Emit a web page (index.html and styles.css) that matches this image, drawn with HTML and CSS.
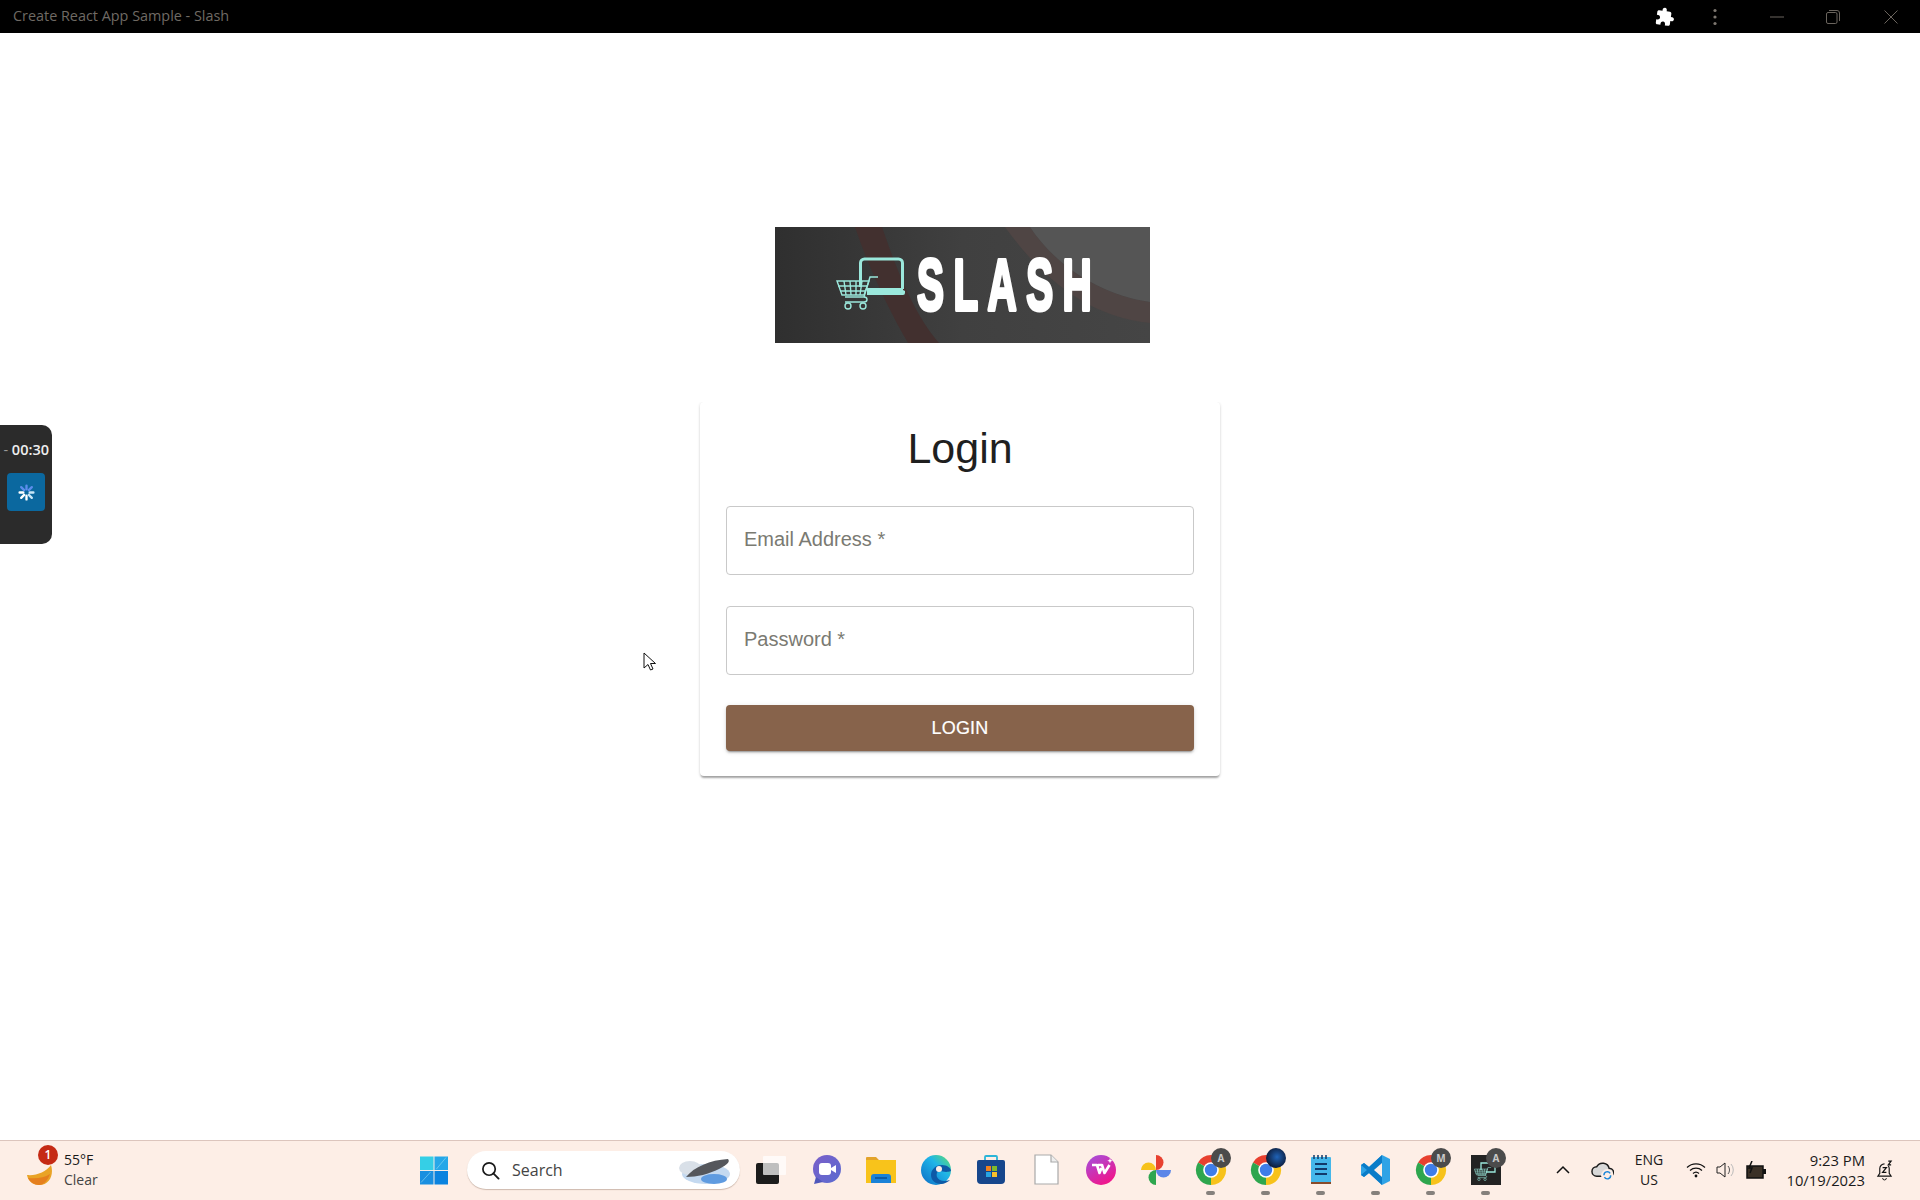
FILE: index.html
```html
<!DOCTYPE html>
<html lang="en">
<head>
<meta charset="utf-8">
<title>Create React App Sample - Slash</title>
<link rel="stylesheet" href="styles.css">
</head>
<body>
<svg class="defs" width="0" height="0" aria-hidden="true">
  <symbol id="chrome" viewBox="0 0 32 32">
    <path fill="#e8402f" d="M16 16L3 8.500A15 15 0 0 1 29 8.500z"/>
    <path fill="#f7c21b" d="M16 16L29 8.500A15 15 0 0 1 16 31z"/>
    <path fill="#2ea64e" d="M16 16L16 31A15 15 0 0 1 3 8.500z"/>
    <circle cx="16" cy="16" r="7.800" fill="#fff"/>
    <circle cx="16" cy="16" r="6.200" fill="#3f7de8"/>
  </symbol>
  <symbol id="cart" viewBox="0 0 44 34">
    <g fill="none" stroke="#9be8dc" stroke-width="1.400">
      <path d="M42 1h-8l-6 20H9"/>
      <path d="M1 5h32l-5 14H6z"/>
      <path d="M2 10h29M4 15h25M8 5l2 14M14 5l1 14M20 5v14M26 5l-2 14"/>
      <path d="M28 21c4 0 4 5 0 5H9"/>
      <circle cx="12" cy="30" r="3"/>
      <circle cx="27" cy="30" r="3"/>
    </g>
  </symbol>
</svg>

<header class="titlebar">
  <span class="window-title">Create React App Sample - Slash</span>
  <div class="window-actions">
    <svg class="puzzle" viewBox="0 0 24 24"><path fill="#fff" transform="rotate(8 12 12)" d="M20.500 11H19V7c0-1.100-.9-2-2-2h-4V3.500C13 2.120 11.880 1 10.500 1S8 2.120 8 3.500V5H4c-1.100 0-1.990.9-1.990 2v3.800H3.500c1.490 0 2.700 1.210 2.700 2.700s-1.210 2.700-2.700 2.700H2V20c0 1.100.9 2 2 2h3.800v-1.500c0-1.490 1.210-2.700 2.700-2.700 1.490 0 2.700 1.210 2.700 2.700V22H17c1.100 0 2-.9 2-2v-4h1.500c1.380 0 2.500-1.120 2.500-2.500S21.880 11 20.500 11z"/></svg>
    <svg class="kebab" viewBox="0 0 6 18"><g fill="#7d7770"><circle cx="3" cy="2.500" r="1.600"/><circle cx="3" cy="9" r="1.600"/><circle cx="3" cy="15.500" r="1.600"/></g></svg>
    <svg class="win-btn win-min" viewBox="0 0 14 14"><path d="M0 7h14" stroke="#6b655e" stroke-width="1"/></svg>
    <svg class="win-btn win-max" viewBox="0 0 14 14"><g fill="none" stroke="#6b655e"><rect x=".5" y="2.500" width="10.500" height="11" rx="1.500"/><path d="M3 .5h8a2.500 2.500 0 0 1 2.500 2.500v8"/></g></svg>
    <svg class="win-btn win-close" viewBox="0 0 14 14"><path d="M.5.5l13 13M13.500.5l-13 13" stroke="#6b655e" fill="none"/></svg>
  </div>
</header>

<main class="page">
  <svg class="logo" viewBox="0 0 375 116" role="img" aria-label="Slash logo">
    <defs>
      <linearGradient id="logoBg" x1="0" y1="0" x2="1" y2="0">
        <stop offset="0" stop-color="#2f2f2f"/><stop offset=".5" stop-color="#404040"/><stop offset="1" stop-color="#454545"/>
      </linearGradient>
    </defs>
    <rect width="375" height="116" fill="url(#logoBg)"/>
    <path fill="#42302f" d="M80 0h27c8 22 26 80 57 116h-31C115 85 94 42 80 0z"/>
    <path fill="#4f4544" d="M230 0h25c25 38 70 68 120 75v21C310 90 262 45 230 0z"/>
    <path fill="#555" d="M255 0h120v75C325 68 280 38 255 0z"/>
    <path d="M85.500 60V36a4 4 0 0 1 4-4h34a4 4 0 0 1 4 4v26" fill="none" stroke="#9be8dc" stroke-width="3"/>
    <path fill="#9be8dc" d="M92 61h36v2l2 1v2a2 2 0 0 1-2 2H92z"/>
    <use href="#cart" x="61" y="48" width="44" height="36"/>
    <text class="logo-word" transform="translate(142 83) scale(.56 1)">SLASH</text>
  </svg>

  <form class="card">
    <h1 class="card-title">Login</h1>
    <input class="field field-email" type="email" placeholder="Email Address *">
    <input class="field field-password" type="password" placeholder="Password *">
    <button class="submit" type="button">LOGIN</button>
  </form>

  <aside class="recorder">
    <div class="rec-time"><span class="rec-dash">-</span> 00:30</div>
    <div class="rec-button">
      <svg class="rec-spin" viewBox="0 0 16 16">
        <g stroke-width="2.200" stroke-linecap="round">
          <path stroke="#fff" d="M8 11v3.500M5.800 10.200l-2.800 2.800M5 8H1.500"/>
          <path stroke="#c8e6f8" d="M10.200 10.200l2.800 2.800M11 8h3.500"/>
          <path stroke="#5c8dec" d="M5.800 5.800L3 3M8 5V1.500M10.200 5.800L13 3"/>
        </g>
      </svg>
    </div>
  </aside>

  <svg class="cursor" viewBox="0 0 14 20"><path d="M1 1v15l4-3.500 2.500 5.500 2.500-1-2.500-5.500h5z" fill="#fff" stroke="#111" stroke-width="1"/></svg>
</main>

<footer class="taskbar">
  <div class="weather">
    <div class="weather-icon">
      <svg class="moon" viewBox="0 0 26 26"><path fill="#e9a326" d="M0 15c9 1 19-3 24-10 3 9-1 20-12 20C6 25 1 21 0 15z"/><path fill="#e57f1e" d="M1 18c8 1 16 0 22-4-2 6-6 11-11 11-5 0-9-3-11-7z"/></svg>
      <span class="badge-red">1</span>
    </div>
    <div class="weather-text">
      <span class="temp">55°F</span>
      <span class="cond">Clear</span>
    </div>
  </div>

  <svg class="start" viewBox="0 0 29 29">
    <rect x="0" y="0" width="14" height="14" fill="#35cfe6"/>
    <rect x="15" y="0" width="14" height="14" fill="#25a7e8"/>
    <rect x="0" y="15" width="14" height="14" fill="#1a8fe0"/>
    <rect x="15" y="15" width="14" height="14" fill="#0b83df"/>
    <path d="M17 13L27 1M1 27L11 16" stroke="#9be3f5" stroke-width=".8" opacity=".7"/>
  </svg>

  <div class="search">
    <svg class="search-glyph" viewBox="0 0 20 20"><circle cx="8.500" cy="8.500" r="6.500" fill="none" stroke="#1a1a1a" stroke-width="1.800"/><path d="M13 13l5.500 5.500" stroke="#1a1a1a" stroke-width="2" stroke-linecap="round"/></svg>
    <span class="search-label">Search</span>
    <svg class="search-art" viewBox="0 0 54 28">
      <ellipse cx="28" cy="18" rx="24" ry="10" fill="#c4d9f0"/>
      <ellipse cx="36" cy="23" rx="13" ry="5" fill="#5f9be0"/>
      <ellipse cx="12" cy="12" rx="11" ry="7" fill="#d9e0e8"/>
      <path d="M8 21C16 11 32 4 50 3c3 3-3 7-9 10-10 5-22 8-33 8z" fill="#55575c"/>
    </svg>
  </div>

  <div class="apps">
    <div class="app">
      <svg class="ico" viewBox="0 0 32 32"><rect x="1" y="9" width="23" height="21" rx="2" fill="#1c1c1c"/><rect x="8" y="2" width="23" height="19" rx="1" fill="#fff" fill-opacity=".72"/></svg>
    </div>
    <div class="app">
      <svg class="ico" viewBox="0 0 32 32"><defs><linearGradient id="meet" x1="0" y1="0" x2="1" y2="1"><stop offset="0" stop-color="#7b5fc9"/><stop offset="1" stop-color="#5a6bd0"/></linearGradient></defs><circle cx="17" cy="15" r="14" fill="url(#meet)"/><path d="M6 23l-2 7 9-2z" fill="#4f57bb"/><rect x="9" y="9" width="12" height="12" rx="3" fill="#fff"/><path d="M21 14l5-3v8l-5-3z" fill="#fff"/></svg>
    </div>
    <div class="app">
      <svg class="ico" viewBox="0 0 32 32"><path d="M1 4a1 1 0 0 1 1-1h9l3 3h17v5H1z" fill="#e3a32a"/><rect x="1" y="6" width="30" height="23" fill="#f8c31b"/><path d="M6 29v-6a3 3 0 0 1 3-3h14a3 3 0 0 1 3 3v6z" fill="#1a82d8"/><path d="M10 24h12" stroke="#0b4f96" stroke-width="1.500"/></svg>
    </div>
    <div class="app">
      <svg class="ico" viewBox="0 0 32 32"><defs><linearGradient id="edge" x1="0" y1="1" x2="1" y2="0"><stop offset="0" stop-color="#0c6bc4"/><stop offset=".6" stop-color="#1fb5e8"/><stop offset="1" stop-color="#62df6a"/></linearGradient></defs><circle cx="16" cy="16" r="15" fill="url(#edge)"/><path d="M31 17c0-3-4-6-9-6-7 0-11 5-11 10 0 6 5 9 10 9 3 0 7-2 9-4-6 2-11 1-13-3-1-3 0-6 3-6 3 0 5 2 11 0z" fill="#0d5aa7"/><circle cx="19" cy="15" r="3" fill="#fdeee6"/></svg>
    </div>
    <div class="app">
      <svg class="ico" viewBox="0 0 32 32"><path d="M10 7V3a1 1 0 0 1 1-1h10a1 1 0 0 1 1 1v4" fill="none" stroke="#2bb5d8" stroke-width="1.800"/><path d="M2 8a2 2 0 0 1 2-2h24a2 2 0 0 1 2 2v18a4 4 0 0 1-4 4H6a4 4 0 0 1-4-4z" fill="#16468c"/><rect x="11" y="12" width="5" height="5" fill="#f0801e"/><rect x="17" y="12" width="5" height="5" fill="#7fba2a"/><rect x="11" y="18" width="5" height="5" fill="#27a4e3"/><rect x="17" y="18" width="5" height="5" fill="#f8c02c"/></svg>
    </div>
    <div class="app">
      <svg class="ico" viewBox="0 0 32 32"><path d="M5 1h16l7 7v22H5z" fill="#fff" stroke="#a9a9a9" stroke-width="1.200"/><path d="M21 1v7h7" fill="#eee" stroke="#a9a9a9" stroke-width="1.200"/></svg>
    </div>
    <div class="app">
      <svg class="ico" viewBox="0 0 32 32"><defs><linearGradient id="wps" x1="0" y1="0" x2=".6" y2="1"><stop offset="0" stop-color="#a152e0"/><stop offset="1" stop-color="#f0168c"/></linearGradient></defs><circle cx="16" cy="16" r="15" fill="url(#wps)"/><path d="M7 11h5l2.500 8 2-5M13 11h4l2.500 8 5-8" fill="none" stroke="#fff" stroke-width="2.600" stroke-linejoin="round"/><path d="M25 4l.7 2 2 .7-2 .7-.7 2-.7-2-2-.7 2-.7z" fill="#fff"/></svg>
    </div>
    <div class="app">
      <svg class="ico" viewBox="0 0 32 32"><path d="M16 16V1a7.500 7.500 0 0 1 0 15z" fill="#e8402f"/><path d="M16 16h15a7.500 7.500 0 0 1-15 0z" fill="#5b85e8"/><path d="M16 16v15a7.500 7.500 0 0 1 0-15z" fill="#2ea64e"/><path d="M16 16H1a7.500 7.500 0 0 1 15 0z" fill="#f7c21b"/></svg>
    </div>
    <div class="app is-open">
      <svg class="ico"><use href="#chrome"/></svg>
      <span class="avatar">A</span>
    </div>
    <div class="app is-open">
      <svg class="ico"><use href="#chrome"/></svg>
      <span class="avatar avatar-photo"></span>
    </div>
    <div class="app is-open">
      <svg class="ico" viewBox="0 0 32 32"><rect x="6" y="3" width="20" height="27" rx="1" fill="#45b7ea"/><path d="M6 28h20v2H6z" fill="#8a4b2a"/><path d="M10 10h12M10 15h12M10 20h12" stroke="#123a6a" stroke-width="1.800"/><path d="M9 1v4M13 1v4M17 1v4M21 1v4" stroke="#123a6a" stroke-width="1.500"/></svg>
    </div>
    <div class="app is-open">
      <svg class="ico" viewBox="0 0 32 32"><path d="M22 1l8 4v22l-8 4-13-12-5 4-3-2v-10l3-2 5 4z" fill="#2fa3e6"/><path d="M22 1v30L9 19l-5 4-3-2 6-5-6-5 3-2 5 4z" fill="#0a7cc8"/><path d="M22 9l-8 7 8 7z" fill="#fdeee6"/></svg>
    </div>
    <div class="app is-open">
      <svg class="ico"><use href="#chrome"/></svg>
      <span class="avatar">M</span>
    </div>
    <div class="app is-open">
      <svg class="ico" viewBox="0 0 32 32"><rect x="1" y="1" width="30" height="30" fill="#232323"/><use href="#cart" x="4" y="13" width="18" height="14"/><path d="M11 16V9h14v9H16" fill="none" stroke="#9be8dc" stroke-width="1.300"/></svg>
      <span class="avatar">A</span>
    </div>
  </div>

  <div class="tray">
    <svg class="tray-chevron" viewBox="0 0 16 10"><path d="M2 8l6-6 6 6" fill="none" stroke="#111" stroke-width="1.500"/></svg>
    <svg class="tray-cloud" viewBox="0 0 24 24"><path d="M6 18a5 5 0 0 1 0-10 7 7 0 0 1 13 2 4 4 0 0 1 1 8z" fill="#d8d8d8" stroke="#1a1a1a" stroke-width="1.500"/><circle cx="17" cy="17" r="6.500" fill="#fdeee6"/><path d="M13.500 17a3.500 3.500 0 0 1 6.500-2M20.500 17a3.500 3.500 0 0 1-6.500 2" fill="none" stroke="#1b87d8" stroke-width="1.500"/></svg>
    <div class="tray-lang"><span>ENG</span><span>US</span></div>
    <svg class="tray-wifi" viewBox="0 0 20 16"><g fill="none" stroke="#111" stroke-width="1.200"><path d="M1 5.500a13 13 0 0 1 18 0"/><path d="M4 8.500a9 9 0 0 1 12 0"/><path d="M7 11.500a4.500 4.500 0 0 1 6 0"/></g><circle cx="10" cy="14" r="1.400" fill="#111"/></svg>
    <svg class="tray-vol" viewBox="0 0 20 18"><path d="M1 6h3l5-4v14l-5-4H1z" fill="none" stroke="#222"/><path d="M12 5a6 6 0 0 1 0 8" fill="none" stroke="#555"/><path d="M15 3a9 9 0 0 1 0 12" fill="none" stroke="#bbb"/></svg>
    <svg class="tray-bat" viewBox="0 0 20 18"><path d="M1 5h16v12H1z" fill="#3a3026" stroke="#111" stroke-width="1.500"/><path d="M17 8h3v5h-3z" fill="#111"/><path d="M6 0L3 7h3l-2 5" fill="none" stroke="#111" stroke-width="1.500"/></svg>
    <div class="tray-clock"><span>9:23 PM</span><span>10/19/2023</span></div>
    <svg class="tray-bell" viewBox="0 0 18 22"><path d="M9 4a5 5 0 0 0-5 5v5l-2 3h14l-2-3V9a5 5 0 0 0-1-3" fill="none" stroke="#111" stroke-width="1.200"/><path d="M7 19a2 2 0 0 0 4 0" fill="none" stroke="#111"/><path d="M7 8h4l-4 5h4M13 1h3l-3 4h3" fill="none" stroke="#111" stroke-width="1.300"/></svg>
  </div>
</footer>
</body>
</html>
```

FILE: styles.css
```css
* { box-sizing: border-box; }

html, body { height: 100%; }

body {
  margin: 0;
  display: flex;
  flex-direction: column;
  height: 1200px;
  background: #fff;
  font-family: "Liberation Sans", Arial, sans-serif;
  overflow: hidden;
}

.defs { position: absolute; }

/* Title bar */
.titlebar {
  flex: 0 0 33px;
  display: flex;
  align-items: center;
  justify-content: space-between;
  background: #000;
  padding-left: 13px;
}
.window-title {
  font-family: "Open Sans", "Noto Sans", sans-serif;
  font-size: 14.400px;
  line-height: 31px;
  padding-bottom: 2px;
  color: #6f6a64;
}
.window-actions {
  display: flex;
  align-items: center;
  padding-right: 22px;
}
.puzzle { width: 20px; height: 20px; display: block; }
.kebab { width: 6px; height: 18px; margin-left: 37px; display: block; }
.win-btn { width: 14px; height: 14px; display: block; }
.win-min { margin-left: 52px; }
.win-max { margin-left: 42px; }
.win-close { margin-left: 44px; }

/* Main */
.page {
  position: relative;
  flex: 1;
  display: flex;
  flex-direction: column;
  align-items: center;
  padding-top: 194px;
}
.logo { width: 375px; height: 116px; display: block; flex: none; margin-left: 5px; }
.logo-word {
  font-family: "Liberation Sans Narrow", "Liberation Sans", sans-serif;
  font-weight: 700;
  font-size: 72px;
  letter-spacing: 17px;
  fill: #fff;
  stroke: #fff;
  stroke-width: 4px;
  stroke-linejoin: round;
}

.card {
  margin-top: 59px;
  width: 520px;
  height: 374px;
  padding: 20px 26px 24px;
  display: flex;
  flex-direction: column;
  background: #fff;
  border-radius: 4px;
  box-shadow: 0 3px 2px -1px rgba(0, 0, 0, .28), 0 1px 3px 0 rgba(0, 0, 0, .18);
  clip-path: inset(0 -8px -8px -8px);
}
.card-title {
  margin: 0 0 32px;
  height: 52px;
  line-height: 52px;
  font-size: 43px;
  font-weight: 400;
  text-align: center;
  color: #1f1f1f;
}
.field {
  display: block;
  width: 100%;
  height: 69px;
  margin: 0 0 31px;
  padding: 0 17px 2px;
  border: 1px solid #c9c9c9;
  border-radius: 4px;
  background: #fff;
  font-family: inherit;
  font-size: 20px;
  outline: none;
}
.field::placeholder { color: #7a7a72; opacity: 1; }
.field-password { margin-bottom: 30px; }
.submit {
  height: 46px;
  border: 0;
  border-radius: 4px;
  background: #87634b;
  color: #fff;
  font-family: inherit;
  font-size: 18px;
  font-weight: 400;
  letter-spacing: .2px;
  -webkit-text-stroke: .2px #fff;
  box-shadow: 0 3px 1px -2px rgba(0, 0, 0, .2), 0 2px 2px 0 rgba(0, 0, 0, .14), 0 1px 5px 0 rgba(0, 0, 0, .12);
}

/* Floating recorder widget */
.recorder {
  position: absolute;
  left: 0;
  top: 392px;
  width: 52px;
  height: 119px;
  padding-top: 15px;
  background: #2b2b2b;
  border-radius: 0 10px 10px 0;
}
.rec-time {
  height: 20px;
  line-height: 20px;
  padding-right: 3px;
  text-align: right;
  font-family: "Open Sans", sans-serif;
  font-size: 14.500px;
  font-weight: 600;
  color: #eee;
  white-space: nowrap;
}
.rec-dash { color: #999; font-weight: 400; }
.rec-button {
  display: flex;
  align-items: center;
  justify-content: center;
  width: 38px;
  height: 38px;
  margin: 13px 0 0 7px;
  background: #0b689f;
  border-radius: 4px;
}
.rec-spin { width: 17px; height: 17px; display: block; }

.cursor {
  position: absolute;
  left: 643px;
  top: 619px;
  width: 14px;
  height: 20px;
}

/* Taskbar */
.taskbar {
  flex: 0 0 59px;
  display: flex;
  align-items: center;
  padding-bottom: 1px;
  background: #fdeee6;
  border-top: 1px solid #dcc5bd;
  font-family: "Open Sans", "Noto Sans", sans-serif;
  color: #1a1a1a;
}
.weather {
  flex: 0 0 420px;
  display: flex;
  align-items: center;
  padding-left: 27px;
}
.weather-icon { position: relative; width: 26px; height: 30px; }
.moon { position: absolute; left: 0; top: 5px; width: 26px; height: 26px; }
.badge-red {
  position: absolute;
  left: 11px;
  top: -10px;
  width: 20px;
  height: 20px;
  border-radius: 50%;
  background: #c52a14;
  color: #fff;
  font-size: 12px;
  font-weight: 600;
  line-height: 20px;
  text-align: center;
}
.weather-text {
  display: flex;
  flex-direction: column;
  margin-left: 11px;
  font-size: 14px;
  line-height: 20px;
}
.cond { color: #444; }
.start { flex: 0 0 28px; width: 28px; height: 29px; }
.search {
  flex: 0 0 273px;
  height: 38px;
  margin-left: 19px;
  display: flex;
  align-items: center;
  padding-left: 14px;
  background: #fff;
  border-radius: 19px;
  box-shadow: 0 1px 1px rgba(120, 90, 70, .35);
}
.search-glyph { width: 19px; height: 19px; display: block; }
.search-label { margin-left: 12px; font-size: 16px; color: #444; flex: 1; }
.search-art { width: 54px; height: 28px; margin-right: 8px; display: block; }

.apps { display: flex; flex: none; margin-left: 3px; }
.app {
  position: relative;
  width: 55px;
  height: 58px;
  display: flex;
  align-items: center;
  justify-content: center;
}
.ico { width: 32px; height: 32px; display: block; }
.is-open::after {
  content: "";
  position: absolute;
  left: 23px;
  bottom: 4px;
  width: 9px;
  height: 4px;
  border-radius: 2px;
  background: #85807c;
}
.avatar {
  position: absolute;
  left: 28px;
  top: 7px;
  width: 20px;
  height: 20px;
  border-radius: 50%;
  background: #4b4b4b;
  color: #c9c9c9;
  font-size: 10px;
  font-weight: 700;
  line-height: 20px;
  text-align: center;
}
.avatar-photo { background: radial-gradient(circle at 55% 45%, #1f63b8, #0d1c3a 70%); }

.tray { display: flex; align-items: center; flex: none; }
.tray-chevron { width: 16px; height: 10px; margin-left: 42px; display: block; }
.tray-cloud { width: 23px; height: 23px; margin-left: 20px; display: block; }
.tray-lang {
  width: 40px;
  margin-left: 15px;
  display: flex;
  flex-direction: column;
  align-items: center;
  font-size: 14px;
  line-height: 20px;
}
.tray-wifi { width: 20px; height: 16px; margin-left: 17px; display: block; }
.tray-vol { width: 20px; height: 18px; margin-left: 10px; display: block; }
.tray-bat { width: 20px; height: 18px; margin-left: 10px; display: block; }
.tray-clock {
  width: 99px;
  display: flex;
  flex-direction: column;
  align-items: flex-end;
  font-size: 14.800px;
  line-height: 20px;
}
.tray-bell { width: 17px; height: 21px; margin-left: 11px; display: block; }
```
